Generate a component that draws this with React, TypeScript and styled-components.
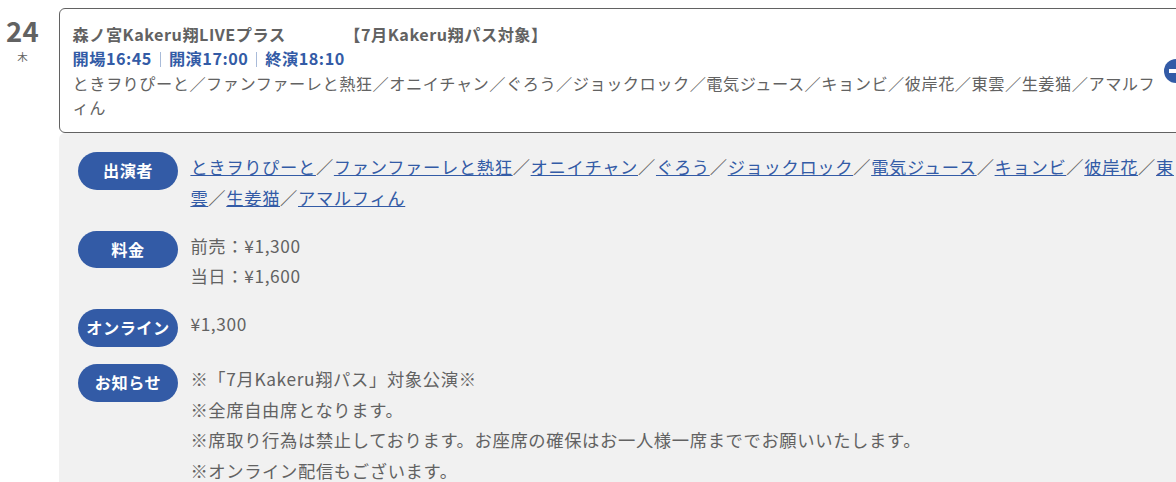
import React from 'react';
import styled, { createGlobalStyle } from 'styled-components';

const GlobalStyle = createGlobalStyle`
  body {
    margin: 0;
    overflow: hidden;
    background: #fff;
    color: #626262;
    font-family: 'Noto Sans CJK JP', sans-serif;
    font-size: 17.3px;
    line-height: 30.6px;
    letter-spacing: 0.65px;
  }
`;

const ScheduleBlock = styled.div`
  display: flex;
  width: 1200px;
  height: 482px;
  overflow: hidden;
`;

const DateBlock = styled.div`
  flex: none;
  width: 59px;
  padding-top: 12px;
  box-sizing: border-box;
  padding-right: 14px;
  text-align: center;

  .day {
    font-size: 27.5px;
    font-weight: 700;
    line-height: 36px;
    letter-spacing: 0.3px;
  }
  .week {
    padding-top: 1px;
    font-size: 10.5px;
    line-height: 16px;
    letter-spacing: 0;
  }
`;

const EventBlock = styled.div`
  flex: none;
  width: 1141px;
  padding-top: 8px;
`;

const Summary = styled.div`
  display: flex;
  align-items: center;
  box-sizing: border-box;
  height: 125px;
  padding-left: 12.5px;
  border: 1px solid #626262;
  border-radius: 6px;
  background: #fff;
  font-size: 16.2px;
  line-height: 24.5px;
  letter-spacing: 0.51px;
`;

const SummaryText = styled.div`
  flex: none;
  width: 1091.5px;

  .title {
    font-weight: 700;
  }
  .time {
    color: #335ba6;
    font-weight: 700;
  }
  .time span {
    display: inline-block;
  }
  .time span + span::before {
    content: '';
    display: inline-block;
    width: 1px;
    height: 15px;
    margin: 0 8px;
    background: #a9bbd9;
    vertical-align: -2px;
  }
`;

const ToggleIcon = styled.div`
  display: flex;
  flex: none;
  align-items: center;
  justify-content: center;
  width: 24px;
  height: 24px;
  border-radius: 50%;
  background: #335ba6;

  &::before {
    content: '';
    width: 14px;
    height: 4px;
    background: #fff;
  }
`;

const Detail = styled.div`
  display: flex;
  flex-direction: column;
  gap: 17.4px;
  height: 400px;
  padding: 19px 0 0 19px;
  border-radius: 6px 6px 0 0;
  background: #f1f1f1;
`;

const Row = styled.div`
  display: flex;
  align-items: flex-start;
`;

const Label = styled.div`
  flex: none;
  width: 100px;
  height: 37.5px;
  margin-right: 12.4px;
  border-radius: 19px;
  background: #335ba6;
  color: #fff;
  font-size: 16.2px;
  font-weight: 700;
  line-height: 37.5px;
  letter-spacing: 0.5px;
  text-align: center;
`;

const Value = styled.div`
  width: 990px;
`;

const ArtistLink = styled.a`
  color: #335ba6;
  text-decoration: underline;
`;

const artists = [
  'ときヲりぴーと',
  'ファンファーレと熱狂',
  'オニイチャン',
  'ぐろう',
  'ジョックロック',
  '電気ジュース',
  'キョンビ',
  '彼岸花',
  '東雲',
  '生姜猫',
  'アマルフィん'
];

const times = ['開場16:45', '開演17:00', '終演18:10'];

const notices = [
  '※「7月Kakeru翔パス」対象公演※',
  '※全席自由席となります。',
  '※席取り行為は禁止しております。お座席の確保はお一人様一席まででお願いいたします。',
  '※オンライン配信もございます。'
];

type DetailRowProps = {
  label: string;
  children: React.ReactNode;
};

function DetailRow({ label, children }: DetailRowProps) {
  return (
    <Row>
      <Label>{label}</Label>
      <Value>{children}</Value>
    </Row>
  );
}

function App() {
  return (
    <>
      <GlobalStyle />
      <ScheduleBlock>
        <DateBlock>
          <div className="day">24</div>
          <div className="week">木</div>
        </DateBlock>
        <EventBlock>
          <Summary>
            <SummaryText>
              <div className="title">
                森ノ宮Kakeru翔LIVEプラス{'\u3000'.repeat(4)}【7月Kakeru翔パス対象】
              </div>
              <div className="time">
                {times.map(time => (
                  <span key={time}>{time}</span>
                ))}
              </div>
              <div className="artists">{artists.join('／')}</div>
            </SummaryText>
            <ToggleIcon />
          </Summary>
          <Detail>
            <DetailRow label="出演者">
              {artists.map((artist, i) => (
                <React.Fragment key={artist}>
                  {i > 0 && '／'}
                  <ArtistLink href="#">{artist}</ArtistLink>
                </React.Fragment>
              ))}
            </DetailRow>
            <DetailRow label="料金">
              <div>前売：¥1,300</div>
              <div>当日：¥1,600</div>
            </DetailRow>
            <DetailRow label="オンライン">¥1,300</DetailRow>
            <DetailRow label="お知らせ">
              {notices.map(notice => (
                <div key={notice}>{notice}</div>
              ))}
            </DetailRow>
          </Detail>
        </EventBlock>
      </ScheduleBlock>
    </>
  );
}

export default App;
